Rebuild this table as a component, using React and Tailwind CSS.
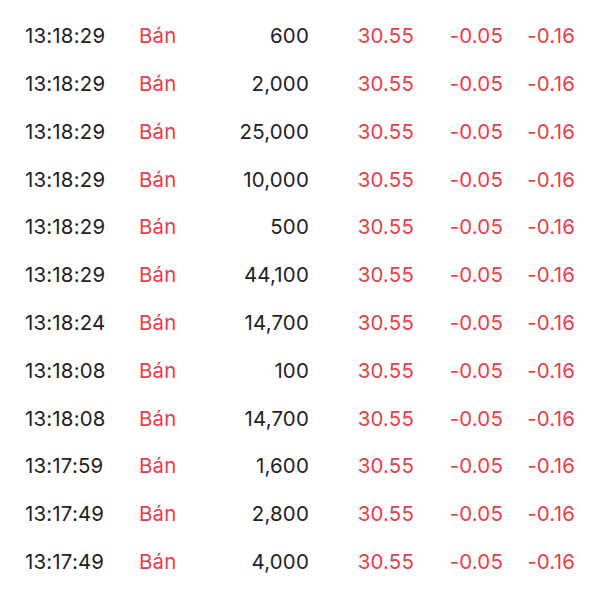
import React from 'react';

const rows = [
  ['13:18:29', '600'],
  ['13:18:29', '2,000'],
  ['13:18:29', '25,000'],
  ['13:18:29', '10,000'],
  ['13:18:29', '500'],
  ['13:18:29', '44,100'],
  ['13:18:24', '14,700'],
  ['13:18:08', '100'],
  ['13:18:08', '14,700'],
  ['13:17:59', '1,600'],
  ['13:17:49', '2,800'],
  ['13:17:49', '4,000'],
];

export default function App() {
  return (
    <div className="w-[600px] h-[600px] bg-white pt-[12.6px] overflow-hidden" style={{ fontFamily: 'Inter, "Noto Sans", sans-serif' }}>
      {rows.map(([time, vol], i) => (
        <div
          key={i}
          className="grid grid-cols-[114px_60px_110px_105px_89px_72px] items-center h-[47.8px] pl-[25px] text-[20.4px] tracking-[0.2px] text-[#222222]"
        >
          <span>{time}</span>
          <span className="text-[#e5404a]">Bán</span>
          <span className="text-right">{vol}</span>
          <span className="text-right text-[#e5404a]">30.55</span>
          <span className="text-right text-[#e5404a]">-0.05</span>
          <span className="text-right text-[#e5404a]">-0.16</span>
        </div>
      ))}
    </div>
  );
}
